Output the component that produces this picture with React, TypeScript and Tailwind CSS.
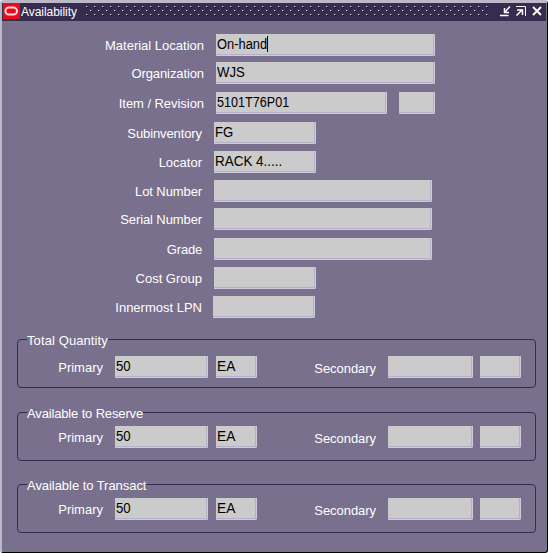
import type { ReactNode } from 'react';

function Field({ className, value = '', caret = false, squeeze = 'scale-x-[.94]' }: { className: string; value?: string; caret?: boolean; squeeze?: string }) {
  return (
    <div
      className={`${className} flex h-[22px] shrink-0 items-start overflow-hidden rounded-br-[2px] border-r border-b border-[#cfcbdc] bg-[#cbcbcb] pl-px text-[14px] leading-[20px] whitespace-pre text-black shadow-[inset_-1px_-1px_0_#b5b1c8]`}
    >
      <span className={`origin-left ${squeeze}`}>{value}</span>
      {caret && <span className="mt-[2px] -ml-[4px] h-4 w-px bg-black" />}
    </div>
  );
}

function Row({ label, gap, inset, tracking = 'tracking-[0px]', children }: { label: string; gap: string; inset: string; tracking?: string; children: ReactNode }) {
  return (
    <div className={`flex h-[22px] ${gap}`}>
      <div className={`${inset} ${tracking} shrink-0 text-right text-[13px] leading-[23px] whitespace-nowrap`}>{label}</div>
      {children}
    </div>
  );
}

function Group({ title, gap, pad, tracking }: { title: string; gap: string; pad: string; tracking: string }) {
  return (
    <section className={`${gap} ml-[15px] h-[49px] w-[519px] rounded-[4px] border border-[#352c52]`}>
      <div className={`-mt-[7px] ml-[9px] h-4 w-fit bg-[#78708c] text-[13px] leading-4 whitespace-nowrap ${tracking}`}>{title}</div>
      <div className={`flex ${pad}`}>
        <div className="w-[85px] text-right text-[13px] leading-[23px] tracking-[0px]">Primary</div>
        <Field className="ml-[12px] w-[93px]" value="50" />
        <Field className="ml-[8px] w-[41px]" value="EA" squeeze="scale-x-[.98]" />
        <div className="w-[119px] text-right text-[13px] leading-[25px] tracking-[-0.05px]">Secondary</div>
        <Field className="ml-[12px] w-[85px]" />
        <Field className="ml-[7px] w-[41px]" />
      </div>
    </section>
  );
}

function TitleBar() {
  return (
    <header className="flex h-[18px] w-[544px] bg-[#352c50]">
      <svg width="17" height="18" viewBox="0 0 17 18" className="ml-px shrink-0">
        <rect width="17" height="16" fill="#ee0b18" />
        <rect x="2.4" y="4.6" width="11.6" height="7" rx="3.5" fill="none" stroke="#ffd9dc" strokeWidth="2" />
      </svg>
      <span className="ml-px w-[64px] shrink-0 text-[12px] leading-[18px] tracking-[-0.05px]">Availability</span>
      <svg width="405" height="18" viewBox="0 0 405 18" className="shrink-0" shapeRendering="crispEdges">
        <defs>
          <pattern id="grip" width="8" height="8" patternUnits="userSpaceOnUse" x="1" y="3">
            <rect width="1" height="1" fill="#e4e0f0" />
            <rect x="1" width="1" height="1" fill="#6c6485" />
            <rect x="1" y="1" width="1" height="1" fill="#080410" />
            <rect x="4" y="4" width="1" height="1" fill="#e4e0f0" />
            <rect x="5" y="4" width="1" height="1" fill="#6c6485" />
            <rect x="5" y="5" width="1" height="1" fill="#080410" />
          </pattern>
        </defs>
        <rect y="2" width="405" height="12" fill="url(#grip)" />
      </svg>
      <svg width="55" height="18" viewBox="490 3 55 18" fill="none" stroke="#fff" className="shrink-0">
        <path d="M500 15.5h8.5M504.5 8v5M504 12.5h5M504.5 12.5l5.5-6" strokeWidth="1.5" />
        <path d="M516 6.5h9.5V16" strokeWidth="1" />
        <path d="M517 10h5.5V15M516.5 15.5l5.5-5.5" strokeWidth="1.5" />
        <path d="M533 7l8 8M541 7l-8 8" strokeWidth="1.9" />
      </svg>
    </header>
  );
}

export default function App() {
  return (
    <main className="h-[553px] w-[548px] overflow-hidden rounded-[3px] border-t-[3px] border-r border-b border-l-2 border-t-[#bbb8c8] border-r-black border-b-black border-l-[#bbb8c8] bg-[#78708c] font-['Liberation_Sans',Arial,sans-serif] text-white">
      <TitleBar />
      <Row label="Material Location" gap="mt-[13px]" inset="w-[202px]">
        <Field className="ml-[12px] w-[219px]" value="On-hand" caret squeeze="scale-x-[.92]" />
      </Row>
      <Row label="Organization" gap="mt-[6px]" inset="w-[202px]" tracking="tracking-[-0.1px]">
        <Field className="ml-[12px] w-[219px]" value="WJS" />
      </Row>
      <Row label="Item / Revision" gap="mt-[8px]" inset="w-[202px]" tracking="tracking-[-0.05px]">
        <Field className="ml-[12px] w-[171px]" value="5101T76P01" squeeze="scale-x-[.9]" />
        <Field className="ml-[12px] w-[36px]" />
      </Row>
      <Row label="Subinventory" gap="mt-[8px]" inset="w-[200px]" tracking="tracking-[-0.1px]">
        <Field className="ml-[12px] w-[102px]" value="FG" />
      </Row>
      <Row label="Locator" gap="mt-[7px]" inset="w-[200px]">
        <Field className="ml-[12px] w-[102px]" value="RACK 4....." squeeze="scale-x-[.96]" />
      </Row>
      <Row label="Lot Number" gap="mt-[7px]" inset="w-[200px]" tracking="tracking-[-0.1px]">
        <Field className="ml-[12px] w-[218px]" />
      </Row>
      <Row label="Serial Number" gap="mt-[6px]" inset="w-[200px]" tracking="tracking-[-0.1px]">
        <Field className="ml-[12px] w-[218px]" />
      </Row>
      <Row label="Grade" gap="mt-[8px]" inset="w-[200px]" tracking="tracking-[-0.2px]">
        <Field className="ml-[12px] w-[218px]" />
      </Row>
      <Row label="Cost Group" gap="mt-[7px]" inset="w-[200px]">
        <Field className="ml-[12px] w-[102px]" />
      </Row>
      <Row label="Innermost LPN" gap="mt-[7px]" inset="w-[200px]">
        <Field className="ml-[11px] w-[102px]" />
      </Row>
      <Group title="Total Quantity" gap="mt-[21px]" pad="pt-[7px]" tracking="tracking-[0.1px]" />
      <Group title="Available to Reserve" gap="mt-[24px]" pad="pt-[4px]" tracking="tracking-[-0.15px]" />
      <Group title="Available to Transact" gap="mt-[23px]" pad="pt-[4px]" tracking="tracking-[-0.05px]" />
    </main>
  );
}
